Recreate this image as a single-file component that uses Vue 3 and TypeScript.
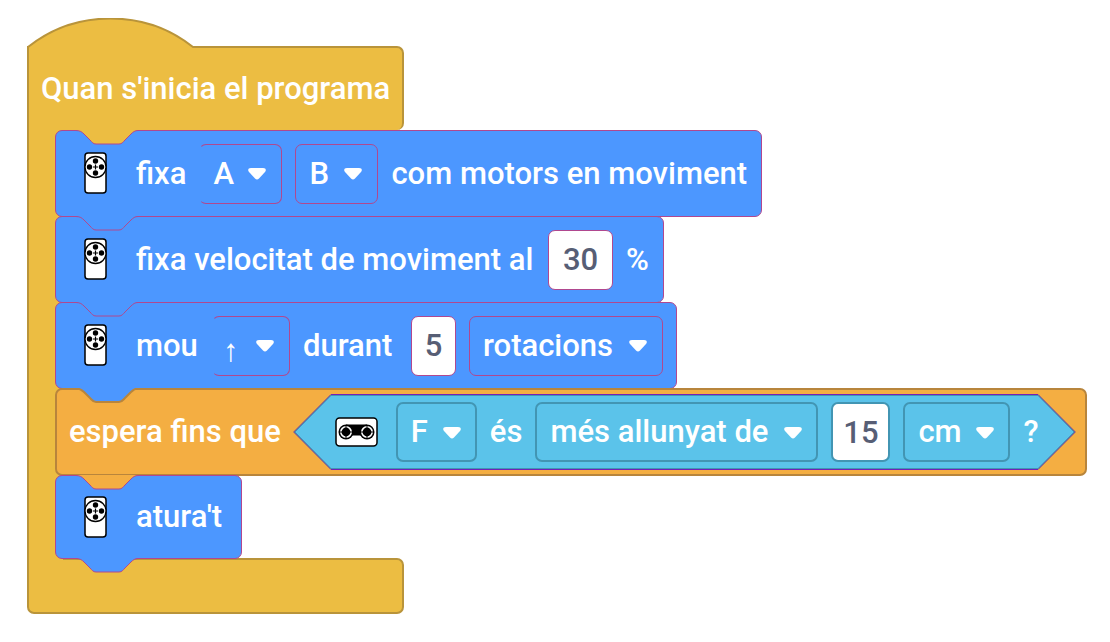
<script setup lang="ts">
type Kind = 'move' | 'control'
type Part =
  | { type: 'motor' }
  | { type: 'text'; value: string; size?: string }
  | { type: 'menu'; value: string; label: string; size: string; open?: boolean }
  | { type: 'number'; value: string; label: string; size: string }

interface Block {
  kind: Kind
  after: 'event' | Kind
  parts: Part[]
  condition?: Part[]
}

const blocks: Block[] = [
  {
    kind: 'move',
    after: 'event',
    parts: [
      { type: 'motor' },
      { type: 'text', value: 'fixa' },
      { type: 'menu', value: 'A', label: 'primer motor', size: 'm-port', open: true },
      { type: 'menu', value: 'B', label: 'segon motor', size: 'm-port' },
      { type: 'text', value: 'com motors en moviment', size: 't-motors' },
    ],
  },
  {
    kind: 'move',
    after: 'move',
    parts: [
      { type: 'motor' },
      { type: 'text', value: 'fixa velocitat de moviment al', size: 't-speed' },
      { type: 'number', value: '30', label: 'velocitat', size: 'n-speed' },
      { type: 'text', value: '%', size: 't-percent' },
    ],
  },
  {
    kind: 'move',
    after: 'move',
    parts: [
      { type: 'motor' },
      { type: 'text', value: 'mou', size: 't-mou' },
      { type: 'menu', value: '↑', label: 'direcció', size: 'm-arrow', open: true },
      { type: 'text', value: 'durant', size: 't-durant' },
      { type: 'number', value: '5', label: 'quantitat', size: 'n-count' },
      { type: 'menu', value: 'rotacions', label: 'unitat', size: 'm-rotations' },
    ],
  },
  {
    kind: 'control',
    after: 'move',
    parts: [{ type: 'text', value: 'espera fins que' }],
    condition: [
      { type: 'menu', value: 'F', label: 'port', size: 'm-sensor' },
      { type: 'text', value: 'és' },
      { type: 'menu', value: 'més allunyat de', label: 'comparació', size: 'm-compare' },
      { type: 'number', value: '15', label: 'distància', size: 'n-distance' },
      { type: 'menu', value: 'cm', label: 'unitat de distància', size: 'm-unit' },
      { type: 'text', value: '?' },
    ],
  },
  {
    kind: 'move',
    after: 'control',
    parts: [{ type: 'motor' }, { type: 'text', value: "atura't", size: 't-stop' }],
  },
]

const notchEdge =
  'C4 .5 6 2 8 4L14 10C16 12 17 14 20 14H43C46 14 47 12 49 10L55 4C57 2 59 .5 62 .5'
const notchFill = `M0 0V.5${notchEdge}V0Z`
const notchLine = `M0 .5${notchEdge}`
</script>

<template>
  <main class="workspace">
    <section class="program">
      <svg class="hat" viewBox="0 0 170 31" aria-hidden="true">
        <path class="hat-fill" d="M1 31V29C49-9 118-9 166 29L169 31Z" />
        <path class="hat-line" d="M1 31V29C49-9 118-9 166 29H170" />
      </svg>
      <header class="head">Quan s'inicia el programa</header>

      <div class="body">
        <div class="spine"></div>
        <div class="stack">
          <div v-for="(block, i) in blocks" :key="i" class="block" :class="block.kind">
            <svg class="notch" :class="'after-' + block.after" viewBox="0 0 62 15" aria-hidden="true">
              <path class="notch-fill" :d="notchFill" />
              <path class="notch-line" :d="notchLine" />
            </svg>

            <template v-for="(part, j) in block.parts" :key="j">
              <svg v-if="part.type === 'motor'" class="motor" viewBox="0 0 54 43" aria-hidden="true">
                <rect x="16" y="1" width="21" height="40" rx="3" fill="#fff" stroke="#000" stroke-width="1.500" />
                <circle cx="26.500" cy="15" r="10.500" fill="#fff" stroke="#000" stroke-width="1.300" />
                <circle cx="26.500" cy="9" r="2.700" />
                <circle cx="26.500" cy="21" r="2.700" />
                <circle cx="20.500" cy="15" r="2.700" />
                <circle cx="32.500" cy="15" r="2.700" />
                <path d="M24 15H29M26.500 12.500V17.500" stroke="#000" stroke-width="1.200" />
              </svg>
              <span v-else-if="part.type === 'text'" class="text" :class="part.size">{{ part.value }}</span>
              <input
                v-else-if="part.type === 'number'"
                class="number"
                :class="part.size"
                type="text"
                :value="part.value"
                :aria-label="part.label"
              />
              <span v-else class="menu" :class="[part.size, { open: part.open }]">
                <select :aria-label="part.label"><option>{{ part.value }}</option></select>
                <svg class="caret" viewBox="0 0 18 12" aria-hidden="true">
                  <path d="M3 0H15C18 0 18.500 2 17 4L11 10.500Q9 12.500 7 10.500L1 4C-.5 2 0 0 3 0Z" />
                </svg>
              </span>
            </template>

            <div v-if="block.condition" class="condition">
              <svg class="cap" viewBox="0 0 38 76" aria-hidden="true">
                <path class="cap-fill" d="M38 .5L.7 38L38 75.500" />
                <path class="cap-inner" d="M38 1.500L2 38L38 74.500" />
                <path class="cap-line" d="M38 .5L.7 38L38 75.500" />
              </svg>
              <div class="condition-body">
                <svg class="sensor" viewBox="0 0 43 30" aria-hidden="true">
                  <rect x="1" y="1" width="41" height="28" rx="3.500" fill="#fff" stroke="#000" stroke-width="1.500" />
                  <rect x="11" y="7.500" width="21" height="11" />
                  <circle cx="11" cy="15" r="7.500" />
                  <circle cx="32" cy="15" r="7.500" />
                  <circle cx="11" cy="15" r="5.200" stroke="#fff" stroke-width="1.600" />
                  <circle cx="32" cy="15" r="5.200" stroke="#fff" stroke-width="1.600" />
                  <path d="M4 15H18M11 8V22M25 15H39M32 8V22" stroke="#000" stroke-width="1" />
                </svg>
                <template v-for="(part, k) in block.condition" :key="k">
                  <span v-if="part.type === 'text'" class="text" :class="part.size">{{ part.value }}</span>
                  <input
                    v-else-if="part.type === 'number'"
                    class="number"
                    :class="part.size"
                    type="text"
                    :value="part.value"
                    :aria-label="part.label"
                  />
                  <span v-else-if="part.type === 'menu'" class="menu" :class="part.size">
                    <select :aria-label="part.label"><option>{{ part.value }}</option></select>
                    <svg class="caret" viewBox="0 0 18 12" aria-hidden="true">
                      <path d="M3 0H15C18 0 18.500 2 17 4L11 10.500Q9 12.500 7 10.500L1 4C-.5 2 0 0 3 0Z" />
                    </svg>
                  </span>
                </template>
              </div>
              <svg class="cap" viewBox="0 0 38 76" aria-hidden="true">
                <path class="cap-fill" d="M0 .5L37.300 38L0 75.500" />
                <path class="cap-inner" d="M0 1.500L36 38L0 74.500" />
                <path class="cap-line" d="M0 .5L37.300 38L0 75.500" />
              </svg>
            </div>

            <svg v-if="i === blocks.length - 1" class="notch tab" viewBox="0 0 62 15" aria-hidden="true">
              <path class="notch-fill" :d="notchFill" />
              <path class="notch-line" :d="notchLine" />
            </svg>
          </div>
        </div>
      </div>

      <footer class="foot"></footer>
    </section>
  </main>
</template>

<style>
body {
  background: #fff;
}
</style>

<style scoped>
.workspace {
  --event: #ecbd42;
  --event-line: #b9943a;
  --move: #4c97ff;
  --move-line: #b0488f;
  --control: #f4ae42;
  --control-line: #b8853c;
  --sense: #5bc3ea;
  --sense-line: #4295b3;
  padding: 18px 22px 28px 27px;
  color: #fff;
  font: 500 31px/40px Roboto, "Liberation Sans", sans-serif;
}
.workspace,
.workspace * {
  box-sizing: border-box;
}
.program {
  display: flex;
  flex-direction: column;
  align-items: flex-start;
}
.hat {
  display: block;
  width: 170px;
  height: 31px;
  margin-bottom: -3px;
  position: relative;
  z-index: 1;
}
.hat-fill {
  fill: var(--event);
}
.hat-line {
  fill: none;
  stroke: var(--event-line);
  stroke-width: 2;
}
.head {
  width: 377px;
  height: 84px;
  padding: 21px 0 0 12px;
  border: 2px solid var(--event-line);
  border-bottom-width: 0;
  border-radius: 0 7px 7px 0;
  background: var(--event);
  white-space: nowrap;
}
.body {
  position: relative;
  z-index: 1;
  display: flex;
}
.spine {
  flex: none;
  width: 36px;
  margin: -8px 0;
  border-left: 2px solid var(--event-line);
  background: var(--event);
}
.stack {
  display: flex;
  flex-direction: column;
  align-items: flex-start;
  margin-left: -8px;
}
.block {
  position: relative;
  display: flex;
  align-items: center;
  gap: 13px;
  padding: 12px 13px;
  margin-bottom: -1px;
  border: 1px solid var(--move-line);
  border-radius: 7px;
  background: var(--move);
  white-space: nowrap;
}
.block.move {
  min-height: 87px;
}
.block.control {
  gap: 12px;
  padding: 4px 9px 4px 12px;
  border: 2px solid var(--control-line);
  background: var(--control);
}
.block.move:last-child {
  min-height: 84px;
  padding: 11px 13px;
}
.notch {
  position: absolute;
  top: -1px;
  left: 20px;
  width: 62px;
  height: 15px;
}
.notch-fill {
  fill: var(--move);
}
.notch-line {
  fill: none;
  stroke: var(--move-line);
}
.control .notch {
  top: -2px;
  left: 19px;
}
.control .notch-line {
  stroke: var(--control-line);
  stroke-width: 2;
}
.after-event .notch-fill {
  fill: var(--event);
}
.after-control .notch-fill {
  fill: var(--control);
}
.notch.tab {
  top: 100%;
}
.motor {
  flex: none;
  width: 54px;
  height: 43px;
}
.sensor {
  flex: none;
  width: 43px;
  height: 30px;
  margin: 0 5px 0 4px;
}
.menu {
  position: relative;
  flex: none;
  height: 60px;
  border: 1px solid var(--move-line);
  border-radius: 7px;
}
.menu.open {
  border-left-color: transparent;
}
.condition .menu {
  border: 2px solid var(--sense-line);
}
select {
  width: 100%;
  height: 100%;
  padding: 0 0 0 13px;
  border: 0;
  background: transparent;
  color: inherit;
  font: inherit;
  appearance: none;
}
.caret {
  position: absolute;
  top: 23px;
  right: 15px;
  width: 18px;
  height: 12px;
  fill: #fff;
  pointer-events: none;
}
.condition .caret {
  right: 14px;
}
.number {
  flex: none;
  height: 60px;
  padding: 0;
  border: 1px solid var(--move-line);
  border-radius: 7px;
  background: #fff;
  color: #575e75;
  font: inherit;
  text-align: center;
}
.condition .number {
  border: 2px solid var(--sense-line);
}
.condition {
  display: flex;
  height: 76px;
}
.condition-body {
  display: flex;
  align-items: center;
  gap: 13px;
  border: solid #7420b8;
  border-width: 1px 0;
  background: var(--sense);
  box-shadow: inset 0 1px var(--sense-line), inset 0 -1px var(--sense-line);
}
.cap {
  flex: none;
  width: 38px;
  height: 76px;
}
.cap-fill {
  fill: var(--sense);
}
.cap-inner {
  fill: none;
  stroke: var(--sense-line);
}
.cap-line {
  fill: none;
  stroke: #6a3490;
}
.t-motors { min-width: 357px; }
.t-speed { min-width: 399px; }
.t-percent { min-width: 24px; }
.t-mou { min-width: 63px; }
.t-durant { min-width: 95px; }
.t-stop { min-width: 92px; }
.m-port { width: 83px; }
.m-arrow { width: 78px; }
.m-arrow select {
  padding: 10px 0 0 10px;
  font-family: "Liberation Sans", sans-serif;
  font-weight: 700;
}
.m-rotations { width: 194px; }
.m-sensor { width: 81px; }
.m-compare { width: 283px; }
.m-unit { width: 107px; }
.n-speed { width: 65px; }
.n-count { width: 45px; }
.n-distance { width: 59px; }
.foot {
  width: 377px;
  height: 56px;
  border: 2px solid var(--event-line);
  border-radius: 0 7px 7px 7px;
  background: var(--event);
}
</style>
